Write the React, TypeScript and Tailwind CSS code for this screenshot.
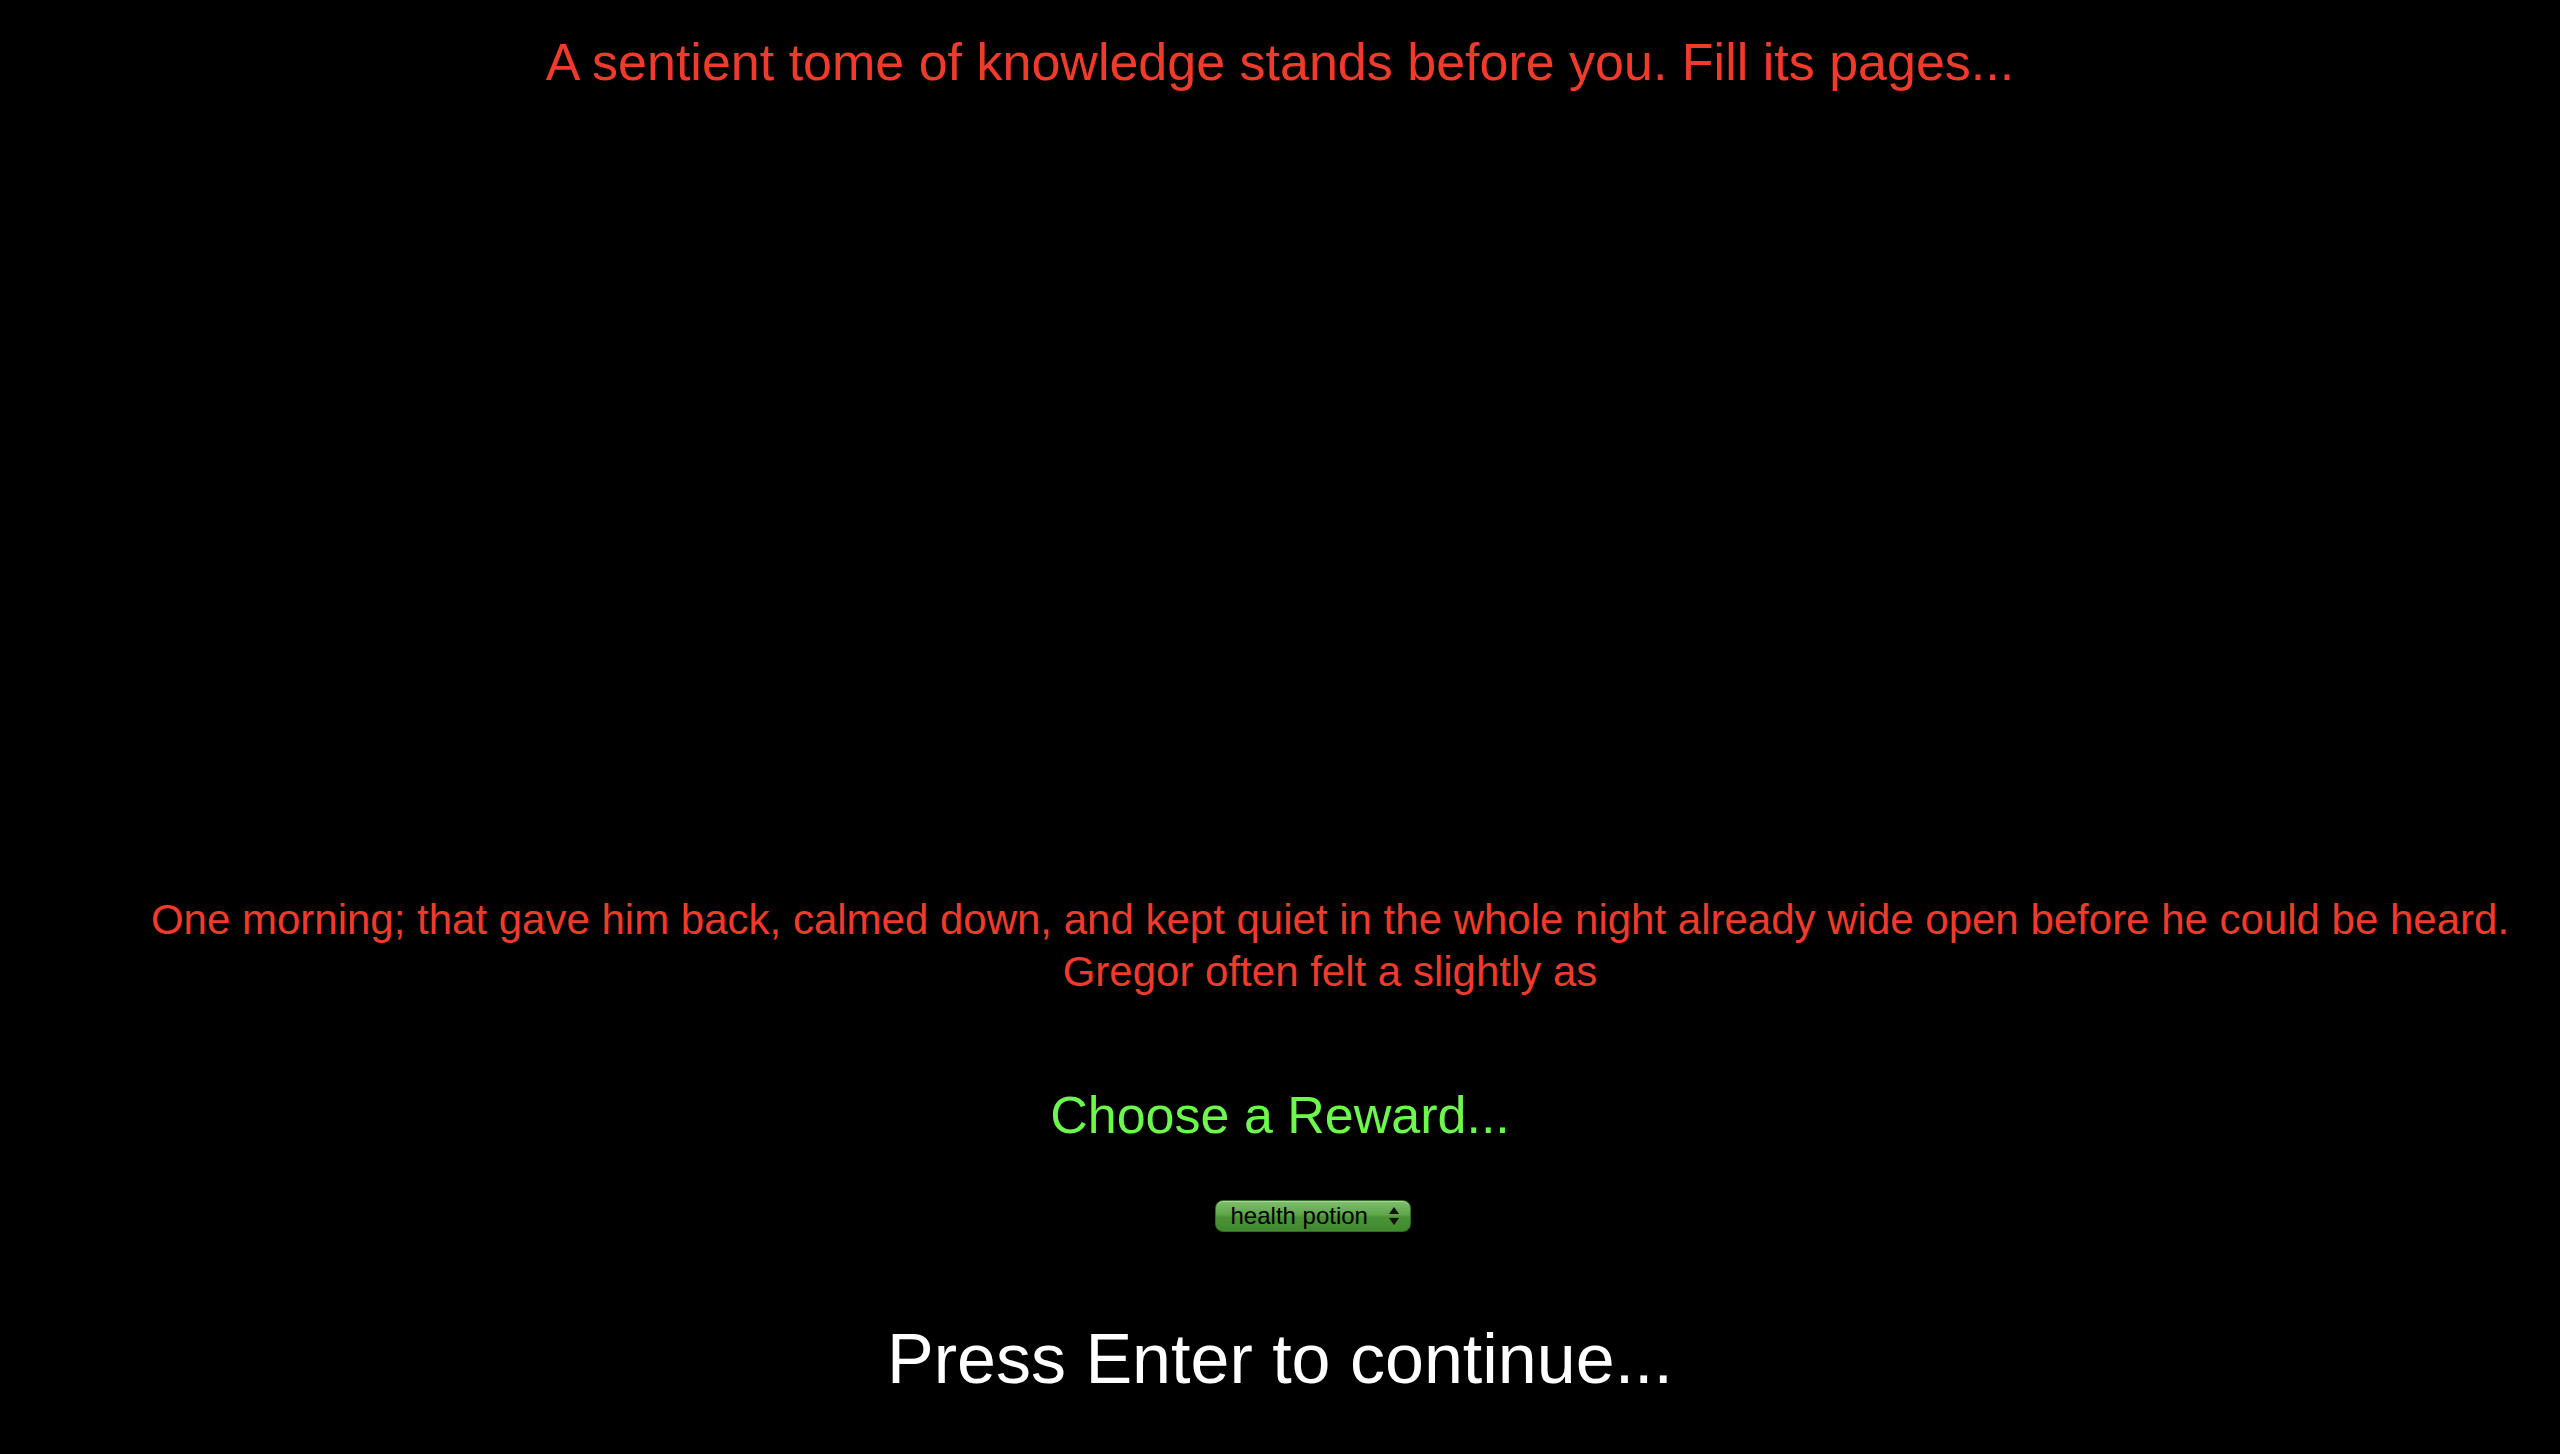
export default function App() {
  return (
    <div
      className="min-h-screen w-full bg-black flex flex-col items-center pt-[32px]"
      style={{ fontFamily: '"Liberation Sans", Arial, sans-serif' }}
    >
      <h1 className="text-[52px] leading-[60px] text-[#f03b2c] text-center">
        A sentient tome of knowledge stands before you. Fill its pages...
      </h1>

      <p className="mt-[802px] w-full pl-[100px] text-center text-[42px] leading-[52px] text-[#f03b2c]">
        One morning; that gave him back, calmed down, and kept quiet in the whole night already wide open before he could be heard. Gregor often felt a slightly as
      </p>

      <h2 className="mt-[87px] text-[52px] leading-[60px] text-[#6cf84c] text-center">
        Choose a Reward...
      </h2>

      <div className="mt-[55px] ml-[65px] h-[32px] w-[196px] rounded-[8px] border border-[#2f6a22] bg-[linear-gradient(#7fbf6c_0%,#5ea64a_45%,#4a9236_55%,#3f8a2c_100%)] shadow-[inset_0_1px_0_rgba(255,255,255,0.35)] flex items-center pl-[15px] pr-[10px]">
        <span className="flex-1 text-[24px] leading-none text-black">health potion</span>
        <svg width="12" height="22" viewBox="0 0 12 22" className="shrink-0">
          <path d="M6 2 L11 9 L1 9 Z" fill="#111" />
          <path d="M6 20 L11 13 L1 13 Z" fill="#111" />
        </svg>
      </div>

      <div className="mt-[87px] text-[70px] leading-[80px] text-white text-center">
        Press Enter to continue...
      </div>
    </div>
  );
}
